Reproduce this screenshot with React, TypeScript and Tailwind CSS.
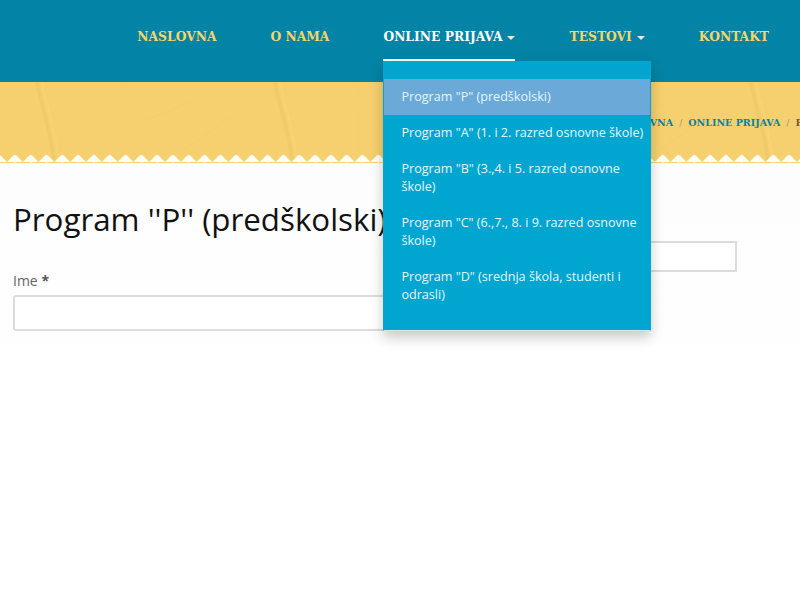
const slab = "font-['DejaVu_Serif',serif]";

const navItems = [
  { label: "NASLOVNA" },
  { label: "O NAMA" },
  { label: "ONLINE PRIJAVA", caret: true, active: true },
  { label: "TESTOVI", caret: true },
  { label: "KONTAKT" }
];

const programs = [
  'Program "P" (predškolski)',
  'Program "A" (1. i 2. razred osnovne škole)',
  'Program "B" (3.,4. i 5. razred osnovne škole)',
  'Program "C" (6.,7., 8. i 9. razred osnovne škole)',
  'Program "D" (srednja škola, studenti i odrasli)'
];

function Dropdown() {
  return (
    <ul className="absolute left-0 top-[61px] z-20 w-[268px] whitespace-normal border border-[#00a6d0] border-b-[#d8e4e8] bg-[#00a6d0] pb-[17px] pt-[17px] text-[12.6px] font-normal leading-[18px] text-[#e6f6fb] shadow-[0_6px_12px_rgba(0,0,0,0.22)] font-['Open_Sans',sans-serif]">
      {programs.map((program, index) => (
        <li key={program} className={`py-[9px] pl-[17px] pr-[6px] ${index === 0 ? "bg-[#6aa9d8]" : ""}`}>
          {program}
        </li>
      ))}
    </ul>
  );
}

function Paper() {
  return (
    <svg className="absolute inset-0 h-full w-full" aria-hidden="true">
      <defs>
        <pattern id="creases" width="238" height="81" patternUnits="userSpaceOnUse" x="-117">
          <rect width="238" height="81" fill="#f6d06e" />
          <path d="M154 0 C158 25 168 45 171 81" stroke="#ecc563" strokeWidth="4" fill="none" opacity="0.45" />
          <path d="M159 0 C163 25 173 45 176 81" stroke="#f9d87c" strokeWidth="2" fill="none" opacity="0.35" />
          <path d="M20 40 L70 20 M60 70 L110 35 M190 50 L235 20" stroke="#eec867" strokeWidth="1" fill="none" opacity="0.4" />
          <path d="M0 0 V81" stroke="#efc968" strokeWidth="1" opacity="0.4" />
        </pattern>
        <pattern id="zigzag" width="15.8" height="8" patternUnits="userSpaceOnUse" x="7">
          <path d="M0 8 L7.9 0 L15.8 8 Z" fill="#fdfdfd" />
        </pattern>
      </defs>
      <rect width="100%" height="100%" fill="url(#creases)" />
      <rect y="73" width="100%" height="8" fill="url(#zigzag)" />
    </svg>
  );
}

export default function App() {
  return (
    <div className="h-[600px] w-[800px] overflow-hidden bg-white font-['Open_Sans',sans-serif]">
      <header className="relative z-10 flex h-[82px] justify-end gap-[54px] bg-[#0383a5] pr-[31px]">
        {navItems.map((item) => (
          <div
            key={item.label}
            className={`relative h-[61px] whitespace-nowrap border-b-2 pt-[27px] text-[12.3px] font-bold leading-5 ${slab} ${
              item.active ? "border-white text-white" : "border-transparent text-[#f8d568]"
            }`}
          >
            {item.label}
            {item.caret ? (
              <span className="ml-[5px] inline-block border-x-4 border-t-4 border-x-transparent border-t-[#e8e8e0] align-middle" />
            ) : null}
            {item.active ? <Dropdown /> : null}
          </div>
        ))}
      </header>

      <div className="relative h-[81px] overflow-hidden">
        <Paper />
        <div className={`relative ml-[612px] flex gap-[6px] whitespace-nowrap pt-[33px] text-[9.5px] font-bold leading-4 text-[#0383a5] ${slab}`}>
          <span>NASLOVNA</span>
          <span className="font-normal text-[#9a9a80]">/</span>
          <span>ONLINE PRIJAVA</span>
          <span className="font-normal text-[#9a9a80]">/</span>
          <span className="text-[#7a5c30]">PROGRAM</span>
        </div>
      </div>

      <main className="flex h-[182px] gap-[13px] bg-gradient-to-b from-[#fdfdfd] to-[#fefefe] pl-[13px]">
        <div className="w-[490px] shrink-0">
          <h1 className="mt-[34px] whitespace-nowrap text-[31.3px] leading-[44px] text-[#111111]">Program ''P'' (predškolski)</h1>
          <label className="mt-[30px] block text-sm leading-5 text-[#666666]">
            Ime <span className="font-bold text-[#555555]">*</span>
          </label>
          <input type="text" className="mt-[4px] block h-[36px] w-full rounded-[3px] border-2 border-[#dcdcdc] bg-white" />
        </div>
        <div className="flex-1 pr-[63px]">
          <input type="text" className="mt-[78px] block h-[31px] w-full border-2 border-[#dcdcdc] bg-white" />
        </div>
      </main>
    </div>
  );
}
